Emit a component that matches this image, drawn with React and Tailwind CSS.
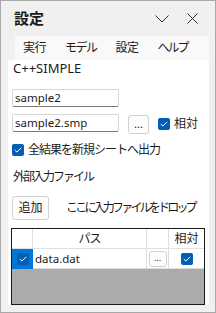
import React from 'react';

const FONT = { fontFamily: '"Noto Sans", "Noto Sans CJK JP", sans-serif' };

const Check = ({ className = '' }) => (
  <span className={`flex h-[12px] w-[12px] items-center justify-center rounded-[2px] bg-[#005fb8] ${className}`}>
    <svg width="8" height="6" viewBox="0 0 8 6" fill="none">
      <path d="M0.8 3.1 L2.9 5 L7.2 0.9" stroke="#ffffff" strokeWidth="1" />
    </svg>
  </span>
);

const TextBox = ({ value }) => (
  <div className="flex h-[18px] w-[107px] items-center rounded-[2px] border border-[#d6d6d6] border-b-[#7a7a7a] bg-white pl-[2px] text-[11.5px] leading-none text-[#1b1b1b]">
    {value}
  </div>
);

export default function App() {
  return (
    <div className="flex h-[313px] w-[216px] flex-col border border-[#a8a8a8] bg-[#f0f0f0] text-[#1b1b1b]" style={FONT}>
      {/* title bar */}
      <div className="flex h-[35px] shrink-0 items-center pl-[13px] pr-[17px]">
        <span className="text-[15px] font-bold leading-none text-[#1b1b1b]">設定</span>
        <div className="ml-auto flex items-center gap-[18px]">
          <svg width="14" height="8" viewBox="0 0 14 8" fill="none">
            <path d="M0.5 0.5 L7 7 L13.5 0.5" stroke="#333333" strokeWidth="1" />
          </svg>
          <svg width="11" height="11" viewBox="0 0 11 11" fill="none">
            <path d="M0.5 0.5 L10.5 10.5 M10.5 0.5 L0.5 10.5" stroke="#333333" strokeWidth="1" />
          </svg>
        </div>
      </div>

      {/* menu */}
      <div className="ml-[14px] mr-[6px] flex h-[24px] shrink-0 items-center gap-[19px] bg-[#f9f9f9] pl-[8px] text-[12px] leading-none tracking-[-0.5px]">
        <span>実行</span>
        <span className="tracking-[-1.5px]">モデル</span>
        <span>設定</span>
        <span className="tracking-[-2px]">ヘルプ</span>
      </div>

      {/* content */}
      <div className="ml-[7px] mr-[6px] flex h-[245px] shrink-0 flex-col bg-white pl-[4px] pr-[3px]">
        <div className="mt-[1px] flex h-[14px] items-center pl-[1px] text-[13px] leading-none">C++SIMPLE</div>

        <div className="mt-[14px]">
          <TextBox value="sample2" />
        </div>

        <div className="mt-[7px] flex items-start">
          <TextBox value="sample2.smp" />
          <div className="ml-[9px] mt-[1px] flex h-[19px] w-[21px] items-center justify-center rounded-[3px] border border-[#d0d0d0] bg-[#fdfdfd] pb-[3px] text-[11px] leading-none">
            ...
          </div>
          <div className="ml-[9px] mt-[4px] flex items-center gap-[4px]">
            <Check />
            <span className="text-[12px] leading-none">相対</span>
          </div>
        </div>

        <div className="mt-[10px] flex h-[12px] items-center gap-[4px]">
          <Check />
          <span className="text-[12px] leading-none tracking-[-1px]">全結果を新規シートへ出力</span>
        </div>

        <div className="mt-[14px] flex h-[14px] items-center pl-[1px] text-[12px] leading-none tracking-[-2px]">
          外部入力ファイル
        </div>

        <div className="mt-[12px] flex items-center">
          <div className="flex h-[24px] w-[37px] items-center justify-center rounded-[3px] border border-[#d0d0d0] bg-[#fdfdfd] text-[12px] leading-none">
            追加
          </div>
          <span className="ml-[17px] text-[12px] leading-none tracking-[-2.8px]">ここに入力ファイルをドロップ</span>
        </div>

        {/* grid */}
        <div className="mt-[8px] ml-[-1px] flex h-[77px] w-[194px] flex-col border border-[#1a1a1a] bg-[#ababab]">
          <div className="flex h-[20px] bg-white text-[12px] leading-none">
            <div className="w-[21px] border-r border-b border-[#e0e0e0]" />
            <div className="flex w-[114px] items-center justify-center border-r border-b border-[#e0e0e0] tracking-[-1px]">パス</div>
            <div className="w-[22px] border-r border-b border-[#e0e0e0]" />
            <div className="flex flex-1 items-center justify-center border-b border-[#e0e0e0]">相対</div>
          </div>
          <div className="flex h-[20px] bg-white text-[11.5px] leading-none">
            <div className="flex w-[21px] items-center justify-center bg-[#0078d7]">
              <Check className="bg-[#0a5cb0]" />
            </div>
            <div className="flex w-[114px] items-center border-r border-b border-[#dcdcdc] pl-[2px]">data.dat</div>
            <div className="flex w-[22px] items-center justify-center border-r border-b border-[#dcdcdc]">
              <div className="flex h-[16px] w-[18px] items-center justify-center rounded-[3px] border border-[#d0d0d0] bg-[#fdfdfd] pb-[3px] text-[9px]">...</div>
            </div>
            <div className="flex flex-1 items-center justify-center border-b border-[#dcdcdc]">
              <Check />
            </div>
          </div>
        </div>
      </div>
    </div>
  );
}
